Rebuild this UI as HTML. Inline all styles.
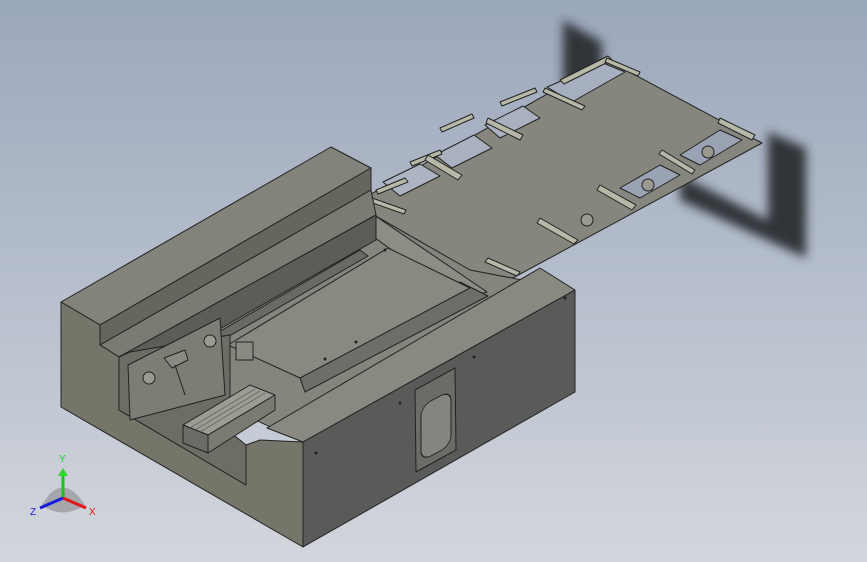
<!DOCTYPE html>
<html><head><style>
html,body{margin:0;padding:0;width:867px;height:562px;overflow:hidden}
body{background:linear-gradient(#9ba7bb 0%,#b3bccb 45%,#d3d6dc 100%);font-family:"Liberation Sans",sans-serif}
svg{position:absolute;left:0;top:0}
</style></head><body>
<svg width="867" height="562" viewBox="0 0 867 562">
<defs>
<filter id="b" x="-30%" y="-30%" width="160%" height="160%"><feGaussianBlur stdDeviation="5"/></filter>
</defs>
<g filter="url(#b)" fill="#2a2d33" opacity="0.95">
<polygon points="563,20 602,42 602,105 563,85"/>
<polygon points="768,132 806,148 806,255 768,235"/>
<polygon points="680,175 806,240 806,258 680,200"/>
</g>
<g stroke="#222" stroke-width="1" stroke-linejoin="round">
<polygon points="343,210 607,60 762,143 487,292" fill="#86867e"/>
<polygon points="547,87 603,63 625,72 572,102" fill="#a6afbf"/>
<polygon points="485,125 523,106 540,118 500,138" fill="#a9b1c0"/>
<polygon points="435,155 474,135 492,148 452,168" fill="#aab2c1"/>
<polygon points="383,182 420,164 440,176 400,196" fill="#adb4c2"/>
<polygon points="720,130 742,140 700,165 680,155" fill="#9aa3b3"/>
<polygon points="660,165 680,175 640,198 620,188" fill="#9aa3b3"/>
<g fill="#b8b8a8">
<polygon points="560,80 608,56 612,60 564,84"/><polygon points="607,58 640,72 638,76 605,62"/>
<polygon points="500,102 535,88 537,92 502,106"/><polygon points="545,88 585,106 582,110 543,92"/>
<polygon points="440,128 472,114 474,118 442,132"/><polygon points="488,118 523,135 520,140 486,123"/>
<polygon points="410,162 440,150 442,154 412,166"/><polygon points="428,155 462,175 458,180 425,160"/>
<polygon points="376,190 405,178 408,182 378,194"/><polygon points="372,198 406,210 404,214 370,202"/>
<polygon points="720,118 755,135 752,140 718,123"/><polygon points="662,150 695,170 692,174 659,154"/>
<polygon points="600,185 636,205 632,210 597,190"/><polygon points="540,218 578,240 574,244 537,223"/>
<polygon points="488,258 520,272 517,276 485,262"/>
</g>
<g fill="#9a9a90"><circle cx="708" cy="152" r="6"/><circle cx="648" cy="185" r="6"/><circle cx="587" cy="220" r="6"/></g>
<polygon points="119,357 374,215 470,270 575,290 303,442" fill="#85857e"/>
<polygon points="340,212 374,215 487,292 460,300 378,240" fill="#8d8d86"/>
<polygon points="300,378 460,282 488,296 305,392" fill="#6e6e68"/>
<polygon points="228,345 388,248 470,288 300,378" fill="#898982"/>
<polygon points="205,340 360,250 368,256 212,346" fill="#6a6a64"/>
<polygon points="61,302 331,147 371,168 100,325" fill="#83837b"/>
<polygon points="100,325 371,168 371,190 100,345" fill="#66665f"/>
<polygon points="100,345 371,190 376,215 119,357" fill="#7b7b74"/>
<polygon points="119,357 376,215 376,240 130,380" fill="#5d5d58"/>
<polygon points="61,302 100,325 100,345 119,357 119,410 246,485 246,445 260,440 303,442 303,547 61,407" fill="#75756a"/>
<polygon points="119,357 130,352 230,335 230,432 246,445 246,485 119,410" fill="#6d6d66"/>
<polygon points="128,365 220,318 225,395 130,420" fill="#7d7d76"/>
<circle cx="149" cy="378" r="6" fill="#9a9a92"/>
<polygon points="164,358 185,350 188,360 172,368" fill="#8a8a82"/>
<line x1="175" y1="365" x2="185" y2="395"/>
<polygon points="183,425 250,385 275,395 208,435" fill="#9c9c94"/>
<polygon points="183,425 208,435 208,453 183,443" fill="#6c6c66"/>
<polygon points="208,435 275,395 275,410 208,453" fill="#7a7a73"/>
<g stroke="#555" stroke-width="0.7"><line x1="195" y1="430" x2="260" y2="391"/><line x1="200" y1="432" x2="265" y2="393"/><line x1="190" y1="428" x2="255" y2="389"/></g>
<rect x="236" y="342" width="17" height="18" fill="#8a8a82"/>
<circle cx="210" cy="341" r="6" fill="#9a9a92"/>
<polygon points="267,428 540,268 575,290 303,442" fill="#898982"/>
<polygon points="303,442 575,290 575,392 303,547" fill="#5a5a58"/>
<polygon points="415,390 455,368 456,450 416,472" fill="#6b6b67"/>
<rect x="421" y="405" width="30" height="55" rx="10" fill="#858580" transform="skewY(-28) translate(0,225)"/>
</g>
<g fill="#222"><circle cx="316" cy="453" r="1.5"/><circle cx="400" cy="403" r="1.5"/><circle cx="565" cy="298" r="1.5"/><circle cx="474" cy="357" r="1.5"/><circle cx="385" cy="250" r="1.5"/><circle cx="356" cy="342" r="1.5"/><circle cx="325" cy="359" r="1.5"/></g>
<g>
<path d="M42,505 Q62,470 85,505 Q62,520 42,505Z" fill="#8a8a90" opacity="0.6"/>
<line x1="63" y1="498" x2="63" y2="474" stroke="#1ac41a" stroke-width="3"/>
<polygon points="58,476 68,476 63,468" fill="#2ed62e"/>
<line x1="63" y1="498" x2="86" y2="508" stroke="#e01818" stroke-width="3"/>
<line x1="63" y1="498" x2="40" y2="508" stroke="#1a1adc" stroke-width="3"/>
<text x="59" y="462" font-size="10" fill="#1ad21a" font-family="Liberation Sans">Y</text>
<text x="89" y="515" font-size="10" fill="#e01818" font-family="Liberation Sans">X</text>
<text x="30" y="515" font-size="10" fill="#1a1adc" font-family="Liberation Sans">Z</text>
</g>
</svg>
</body></html>
